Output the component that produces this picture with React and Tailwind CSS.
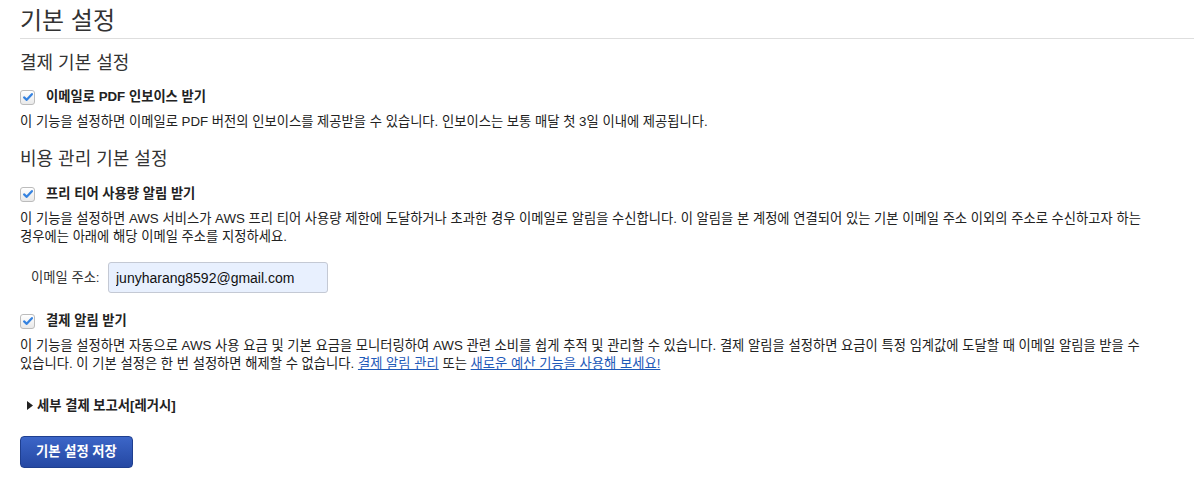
import { useState } from 'react';

const font = { fontFamily: '"Liberation Sans", "Noto Sans CJK KR", sans-serif' };

function Check({ checked = true }) {
  return (
    <span className="flex h-[15px] w-[15px] items-center justify-center rounded-[3px] border border-[#bcbcbc] bg-gradient-to-b from-white to-[#e9e9e9]">
      {checked && (
        <svg viewBox="0 0 16 16" className="h-[12px] w-[12px]">
          <path d="M2.8 8.6 L6.3 11.8 L13.2 4.2" fill="none" stroke="#3683e0" strokeWidth="3" strokeLinecap="round" strokeLinejoin="round" />
        </svg>
      )}
    </span>
  );
}

function Option({ label, children }) {
  return (
    <div>
      <label className="flex h-[20px] items-center gap-[11px]">
        <Check />
        <span className="text-[13.3px] font-bold text-[#222]">{label}</span>
      </label>
      <p className="mt-[6px] text-[13.3px] leading-[18px] text-[#222]">{children}</p>
    </div>
  );
}

export default function App() {
  const [email, setEmail] = useState('junyharang8592@gmail.com');

  return (
    <div className="min-h-screen bg-white pl-[20px] text-[#333]" style={font}>
      <h1 className="flex h-[39px] items-center border-b border-[#dedede] pt-[3px] text-[24px] font-normal text-[#333]">
        기본 설정
      </h1>

      <h2 className="mt-[12px] text-[18px] leading-[24px] text-[#333]">결제 기본 설정</h2>
      <div className="mt-[12px]">
        <Option label="이메일로 PDF 인보이스 받기">
          이 기능을 설정하면 이메일로 PDF 버전의 인보이스를 제공받을 수 있습니다. 인보이스는 보통 매달 첫 3일 이내에 제공됩니다.
        </Option>
      </div>

      <h2 className="mt-[16px] text-[18px] leading-[24px] text-[#333]">비용 관리 기본 설정</h2>
      <div className="mt-[13px]">
        <Option label="프리 티어 사용량 알림 받기">
          이 기능을 설정하면 AWS 서비스가 AWS 프리 티어 사용량 제한에 도달하거나 초과한 경우 이메일로 알림을 수신합니다. 이 알림을 본 계정에 연결되어 있는 기본 이메일 주소 이외의 주소로 수신하고자 하는
          <br />
          경우에는 아래에 해당 이메일 주소를 지정하세요.
        </Option>
      </div>

      <div className="mt-[16px] flex items-center pl-[11px]">
        <span className="w-[77px] text-[13.3px] text-[#333]">이메일 주소:</span>
        <input
          value={email}
          onChange={(e) => setEmail(e.target.value)}
          className="h-[31px] w-[220px] rounded-[3px] border border-[#c4c9d4] bg-[#e8f0fe] px-[7px] text-[14px] text-[#111] outline-none"
          style={font}
        />
      </div>

      <div className="mt-[18px]">
        <Option label="결제 알림 받기">
          이 기능을 설정하면 자동으로 AWS 사용 요금 및 기본 요금을 모니터링하여 AWS 관련 소비를 쉽게 추적 및 관리할 수 있습니다. 결제 알림을 설정하면 요금이 특정 임계값에 도달할 때 이메일 알림을 받을 수
          <br />
          있습니다. 이 기본 설정은 한 번 설정하면 해제할 수 없습니다.{' '}
          <a href="#" className="text-[#1f5ab8] underline">결제 알림 관리</a> 또는{' '}
          <a href="#" className="text-[#1f5ab8] underline">새로운 예산 기능을 사용해 보세요!</a>
        </Option>
      </div>

      <div className="mt-[23px] flex items-center gap-[4px] pl-[7px]">
        <svg viewBox="0 0 8 12" className="h-[11px] w-[6px]">
          <path d="M0 0 L8 6 L0 12 Z" fill="#222" />
        </svg>
        <span className="text-[13.3px] font-bold text-[#222]">세부 결제 보고서[레거시]</span>
      </div>

      <button className="mt-[20px] h-[32px] rounded-[4px] border border-[#1f3f8f] bg-gradient-to-b from-[#3c66c8] to-[#2548a3] px-[15px] text-[13.3px] font-bold text-white">
        기본 설정 저장
      </button>
    </div>
  );
}
